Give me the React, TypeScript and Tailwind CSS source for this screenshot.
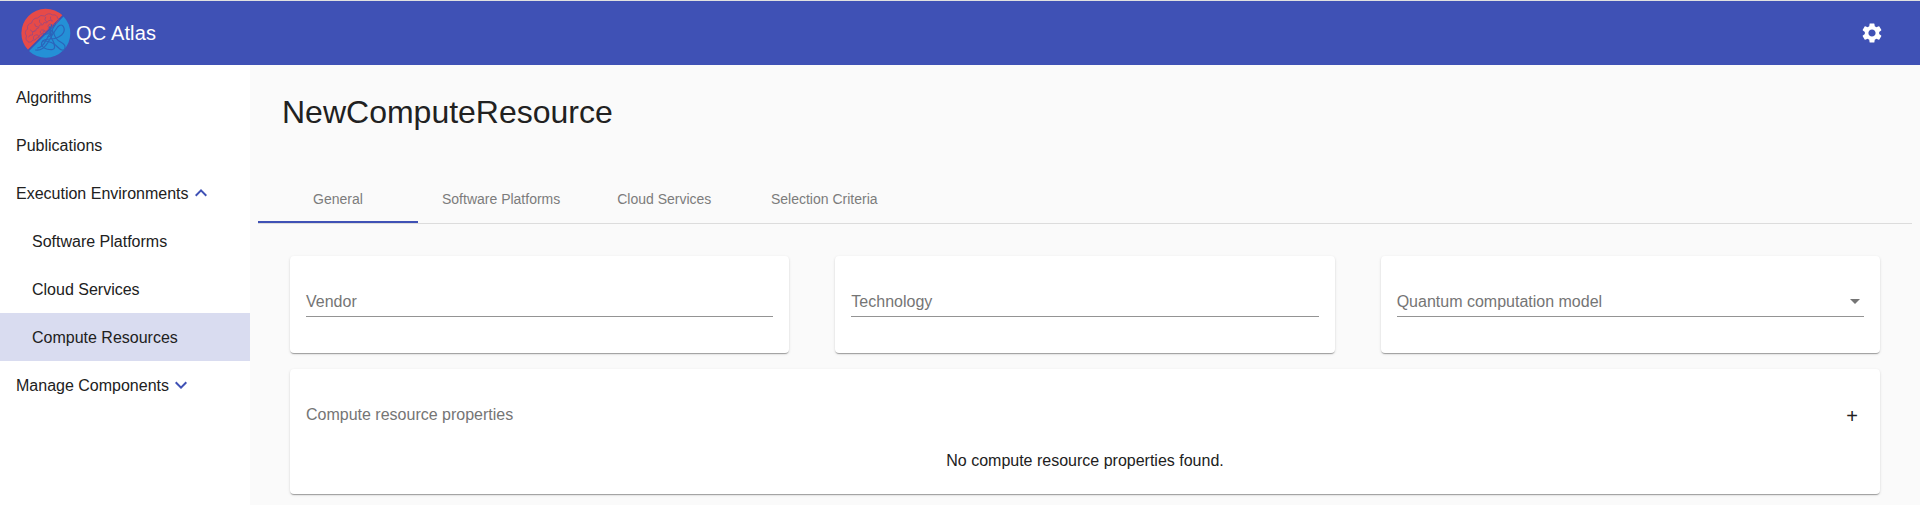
import type { ReactNode } from "react";
import { MdArrowDropDown, MdExpandLess, MdExpandMore, MdSettings } from "react-icons/md";

function Logo() {
  return (
    <svg className="h-[50px] w-[50px]" viewBox="0.4 0 50 50" fill="none">
      <path d="M7.6 42.1A24.4 24.4 0 0 1 42.1 7.6Z" fill="#e64a48" />
      <path d="M42.9 8.4A24.4 24.4 0 0 1 8.4 42.9Z" fill="#2490d6" />
      <path d="M7.2 42.8L42.8 7.2" stroke="#3f51b5" strokeWidth="1.4" />
      <g stroke="#a0487c" strokeWidth="0.9" strokeLinecap="round">
        <path d="M8 34q-4-2-2-6q-3-4 1-7q-1-5 4-6q1-5 6-5q3-4 7-2q4-4 8-1q4-1 5 3" />
        <path d="M8 34q3 1 4-2q3 1 4-2q3 0 3-3q4 0 4-4q4 1 5-3q4 0 4-3q4 0 5-4q3-1 0-3" />
        <path d="M8 29q1-3 4-2q-1-4 3-4q0-3 3-3q0-4 4-3q1-4 4-2q2-4 5-2" />
        <path d="M10 22q1 3 4 1M14 16q0 3 3 3M19 12q-1 3 2 4M25 9q-2 3 1 5M30 9q-1 3 2 4M13 31q-1-3 2-4q3-1 3 2M21 26q-3-2 0-4q3-1 4 2M28 20q-2-2 1-4q3 0 3 2" />
      </g>
      <g stroke="#2b64ba" strokeWidth="1.2" strokeLinecap="round">
        <path d="M15 42q7 1 12-7q5-9 10-16q4-4 6 0q2 4-2 8q-5 4-11 4q-8 0-9 4q-1 4 5 6q8 2 8-2q0-4-3-9q-3-7 0-13" />
        <path d="M17 40q5-1 8-7q5-9 10-17M22 33q10 0 15 6q5 5 7 2q2-4-4-7q-6-3-7-10" />
        <path d="M23 26q4 1 6-2q2-3 0-5M27 29q5-1 5-7" />
      </g>
    </svg>
  );
}

type NavItem = { label: string; child?: boolean; active?: boolean; icon?: ReactNode };

const navItems: NavItem[] = [
  { label: "Algorithms" },
  { label: "Publications" },
  { label: "Execution Environments", icon: <MdExpandLess className="size-6 text-[#3f51b5]" /> },
  { label: "Software Platforms", child: true },
  { label: "Cloud Services", child: true },
  { label: "Compute Resources", child: true, active: true },
  { label: "Manage Components", icon: <MdExpandMore className="size-6 text-[#3f51b5]" /> },
];

const tabs = ["General", "Software Platforms", "Cloud Services", "Selection Criteria"];

function Card({ className, children }: { className: string; children: ReactNode }) {
  return (
    <div
      className={`rounded bg-white px-4 shadow-[0_2px_1px_-1px_rgba(0,0,0,0.2),0_1px_1px_0_rgba(0,0,0,0.14),0_1px_3px_0_rgba(0,0,0,0.12)] ${className}`}
    >
      {children}
    </div>
  );
}

function Field({ label, select }: { label: string; select?: boolean }) {
  return (
    <Card className="h-[97px] pt-8">
      <div className="flex h-[29px] items-center justify-between border-b border-[#949494] text-[#757575]">
        <span>{label}</span>
        {select && <MdArrowDropDown className="-mr-[3px] mb-0.5 size-6" />}
      </div>
    </Card>
  );
}

export default function App() {
  return (
    <div className="flex h-[505px] w-full flex-col overflow-hidden border-t border-[#e0e0e0] bg-[#fafafa] font-['Liberation_Sans',Arial,sans-serif] text-base text-[#212121]">
      <header className="flex h-16 shrink-0 items-center justify-between bg-[#3f51b5] pr-9 pl-[21px] text-white">
        <div className="flex items-center gap-[5px]">
          <Logo />
          <h1 className="text-xl leading-8 tracking-[0.15px]">QC Atlas</h1>
        </div>
        <MdSettings className="size-6" />
      </header>

      <div className="flex min-h-0 flex-1">
        <nav className="w-[250px] shrink-0 bg-white pt-2">
          {navItems.map((item) => (
            <a
              key={item.label}
              className={`flex h-12 items-center ${item.child ? "pl-8" : "pl-4"} ${item.active ? "bg-[#d9dcf0]" : ""}`}
            >
              <span className="pt-px">{item.label}</span>
              {item.icon}
            </a>
          ))}
        </nav>

        <main className="min-w-0 flex-1 px-2 pt-[27px]">
          <h2 className="pl-6 text-[32px] leading-10">NewComputeResource</h2>

          <div className="mt-[43px] flex h-[49px] border-b border-[#dcdcdc] text-sm text-[#7c7c7c]">
            {tabs.map((tab, i) => (
              <div
                key={tab}
                className={`flex h-12 min-w-40 items-center justify-center border-b-2 px-6 pt-0.5 ${i === 0 ? "border-[#3f51b5]" : "border-transparent"}`}
              >
                {tab}
              </div>
            ))}
          </div>

          <div className="mt-8 px-8">
            <div className="grid grid-cols-3 gap-x-[46px]">
              <Field label="Vendor" />
              <Field label="Technology" />
              <Field label="Quantum computation model" select />
            </div>

            <Card className="mt-4 h-[125px] pt-[34px]">
              <div className="flex h-6 items-center justify-between text-[#757575]">
                <span>Compute resource properties</span>
                <span className="pt-0.5 pr-1.5 text-xl leading-6 text-[#212121]">+</span>
              </div>
              <p className="mt-[22px] text-center">No compute resource properties found.</p>
            </Card>
          </div>
        </main>
      </div>
    </div>
  );
}
